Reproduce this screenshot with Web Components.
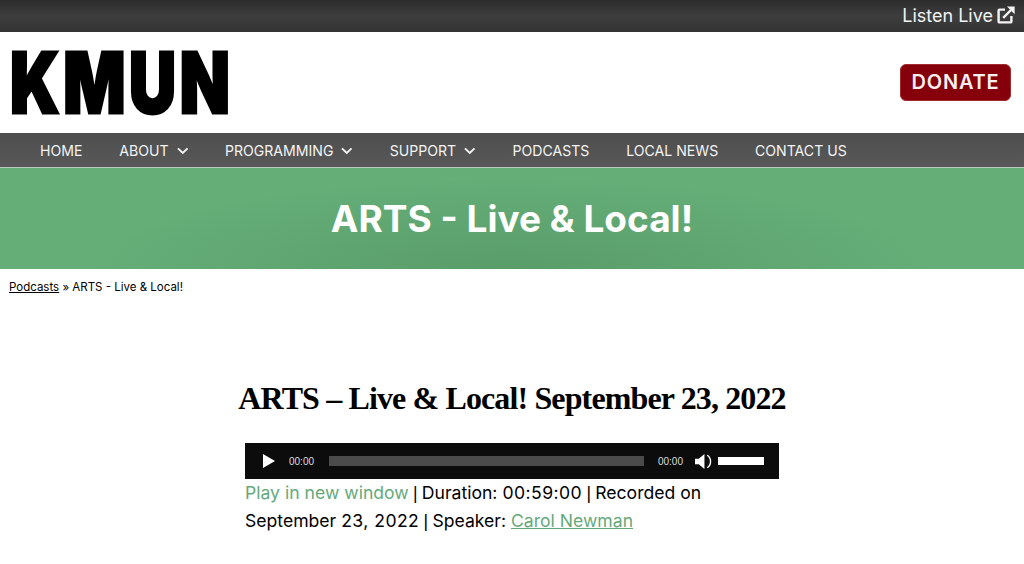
<!DOCTYPE html>
<html>
<head>
<meta charset="utf-8">
<title>ARTS - Live &amp; Local!</title>
<style>
  html, body { margin: 0; padding: 0; background: #fff; }
  body { font-family: Inter, "Liberation Sans", sans-serif; color: #000; overflow: hidden; height: 564px; }
</style>
</head>
<body>
<top-bar></top-bar>
<site-header></site-header>
<main-nav>
  <nav-item>HOME</nav-item>
  <nav-item caret>ABOUT</nav-item>
  <nav-item caret>PROGRAMMING</nav-item>
  <nav-item caret>SUPPORT</nav-item>
  <nav-item>PODCASTS</nav-item>
  <nav-item>LOCAL NEWS</nav-item>
  <nav-item>CONTACT US</nav-item>
</main-nav>
<page-banner>ARTS - Live &amp; Local!</page-banner>
<bread-crumbs></bread-crumbs>
<podcast-entry></podcast-entry>

<script>
class TopBar extends HTMLElement {
  connectedCallback() {
    this.attachShadow({ mode: "open" }).innerHTML = `
      <style>
        :host {
          display: flex;
          justify-content: flex-end;
          align-items: center;
          height: 30px;
          padding: 0 9px 2px 0;
          color: #f2f2f2;
          font-size: 18px;
          background: linear-gradient(#2c2c2c, #3e3e3e 50%, #333);
        }
        svg { width: 18px; height: 18px; margin-left: 4px; display: block; }
      </style>
      <span>Listen Live</span>
      <svg viewBox="0 0 18 18" fill="none" stroke="#f4f4f4" stroke-width="2.4">
        <path d="M8 3.6H2.6a1 1 0 0 0-1 1V15.4a1 1 0 0 0 1 1H13.4a1 1 0 0 0 1-1V10"/>
        <path d="M6.2 11.8 14 4"/>
        <path d="M10 .6H17.6V8.2z" fill="#f4f4f4" stroke="none"/>
      </svg>`
  }
}

class SiteHeader extends HTMLElement {
  connectedCallback() {
    this.attachShadow({ mode: "open" }).innerHTML = `
      <style>
        :host {
          display: flex;
          justify-content: space-between;
          align-items: center;
          height: 101px;
          padding: 0 13px 0 10px;
          background: #fff;
        }
        .logo {
          font: 900 88px/1 Inter, "Liberation Sans", sans-serif;
          -webkit-text-stroke: 3px #000;
          letter-spacing: 5px;
          transform: scale(.74, .96);
          transform-origin: left center;
          width: 217px;
          margin-bottom: 2px;
          white-space: nowrap;
        }
        a {
          display: block;
          width: 111px;
          height: 37px;
          box-sizing: border-box;
          line-height: 35px;
          text-align: center;
          color: #f6f0f0;
          background: #85000a;
          border: 1px solid #a22b2f;
          border-radius: 6px;
          font-size: 20px;
          font-weight: 600;
          letter-spacing: .8px;
        }
      </style>
      <div class="logo">KMUN</div>
      <a>DONATE</a>`
  }
}

class MainNav extends HTMLElement {
  connectedCallback() {
    this.attachShadow({ mode: "open" }).innerHTML = `
      <style>
        :host {
          display: flex;
          align-items: center;
          gap: 36.8px;
          height: 34px;
          padding-left: 40px;
          color: #f4f4f4;
          font-size: 14.1px;
          background: linear-gradient(#4e4e4e, #585858);
          border-bottom: 1px solid #b9c9bc;
        }
      </style>
      <slot></slot>`
  }
}

class NavItem extends HTMLElement {
  connectedCallback() {
    const caret = this.hasAttribute("caret")
      ? `<svg viewBox="0 0 12 8" fill="none" stroke="#f4f4f4" stroke-width="2"><path d="M1 1.2 6 6l5-4.8"/></svg>`
      : ""
    this.attachShadow({ mode: "open" }).innerHTML = `
      <style>
        :host { display: flex; align-items: center; gap: 8px; }
        svg { width: 11.5px; height: 8px; margin-top: 2px; }
      </style>
      <slot></slot>${caret}`
  }
}

class PageBanner extends HTMLElement {
  connectedCallback() {
    this.attachShadow({ mode: "open" }).innerHTML = `
      <style>
        :host {
          display: flex;
          justify-content: center;
          align-items: center;
          height: 101px;
          color: #fff;
          font-size: 37px;
          font-weight: 700;
          background:
            radial-gradient(ellipse 420px 90px at 50% 100%, rgba(70,130,85,.4), transparent),
            #65ae78;
        }
      </style>
      <slot></slot>`
  }
}

class BreadCrumbs extends HTMLElement {
  connectedCallback() {
    this.attachShadow({ mode: "open" }).innerHTML = `
      <style>
        :host { display: block; padding: 10px 9px 0; font-size: 11.5px; line-height: 16px; }
        a { color: #000; text-decoration: underline; }
      </style>
      <a>Podcasts</a> » ARTS - Live &amp; Local!`
  }
}

class AudioPlayer extends HTMLElement {
  connectedCallback() {
    this.attachShadow({ mode: "open" }).innerHTML = `
      <style>
        :host {
          display: flex;
          align-items: center;
          height: 36px;
          padding: 0 15px 0 18px;
          background: #0c0c0c;
          color: #ddd;
          font: 10px "Liberation Sans", sans-serif;
        }
        .play { width: 12px; height: 14px; margin-right: 14px; }
        .rail { flex: 1; height: 10px; margin: 0 14px 0 15px; background: #4b4b4b; }
        .vol { width: 17px; height: 17px; margin: 0 6px 0 12px; }
        .level { width: 46px; height: 8px; background: #fff; }
      </style>
      <svg class="play" viewBox="0 0 12 14"><path d="M0 0 12 7 0 14z" fill="#fff"/></svg>
      <span>00:00</span>
      <div class="rail"></div>
      <span>00:00</span>
      <svg class="vol" viewBox="0 0 18 18">
        <path d="M0 6h4l6-5v16l-6-5H0z" fill="#fff"/>
        <path d="M11.5 6a4 4 0 0 1 0 6" fill="none" stroke="#111" stroke-width="1.4"/>
        <path d="M13 2.4a8 8 0 0 1 0 13.2" fill="none" stroke="#fff" stroke-width="1.5"/>
      </svg>
      <div class="level"></div>`
  }
}

class PodcastEntry extends HTMLElement {
  connectedCallback() {
    this.attachShadow({ mode: "open" }).innerHTML = `
      <style>
        :host { display: block; }
        h1 {
          margin: 83px 0 25px;
          text-align: center;
          font: 700 32px/40px "Liberation Serif", serif;
          letter-spacing: -.87px;
        }
        .body { width: 534px; margin-left: 245px; }
        p { margin: 0; font-size: 17.6px; line-height: 27px; }
        a { color: #65a97a; }
        .plain { text-decoration: none; }
        .num { letter-spacing: .45px; }
        .pipe { font-family: "Liberation Sans", sans-serif; margin: 0 -.7px; }
      </style>
      <h1>ARTS – Live &amp; Local! September 23, 2022</h1>
      <div class="body">
        <audio-player></audio-player>
        <p><a class="plain">Play in new window</a> <span class="pipe">|</span> Duration: <span class="num">00:59:00</span> <span class="pipe">|</span> Recorded on<br>September <span class="num">23, 2022</span> <span class="pipe">|</span> Speaker: <a style="text-decoration:underline">Carol Newman</a></p>
      </div>`
  }
}

customElements.define("top-bar", TopBar)
customElements.define("site-header", SiteHeader)
customElements.define("main-nav", MainNav)
customElements.define("nav-item", NavItem)
customElements.define("page-banner", PageBanner)
customElements.define("bread-crumbs", BreadCrumbs)
customElements.define("audio-player", AudioPlayer)
customElements.define("podcast-entry", PodcastEntry)
</script>
</body>
</html>
